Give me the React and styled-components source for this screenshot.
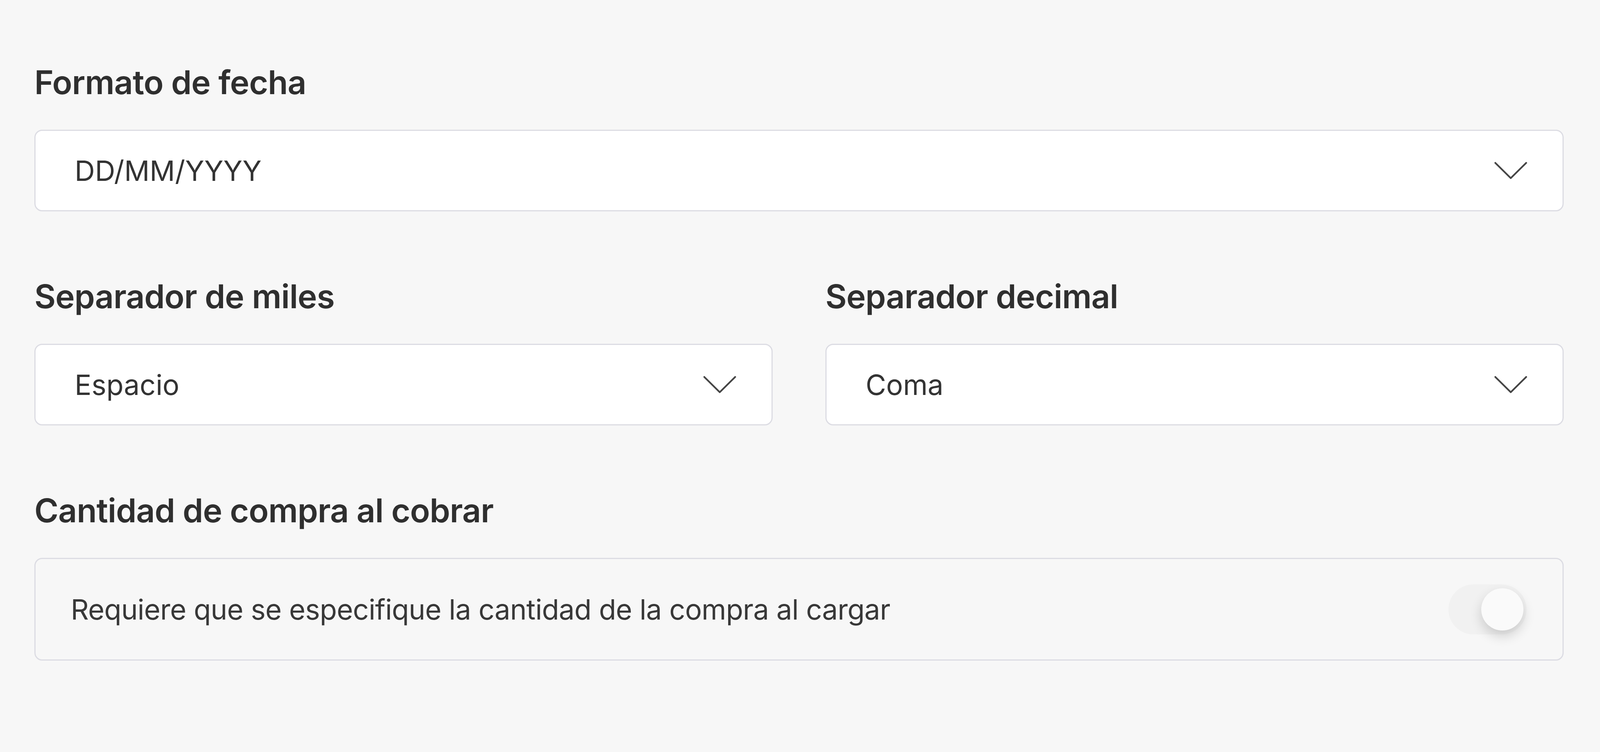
import React, { useState } from "react";
import styled, { createGlobalStyle } from "styled-components";

const GlobalStyle = createGlobalStyle`
  html, body {
    margin: 0;
    padding: 0;
    background: #f7f7f7;
  }
  body {
    font-family: Inter, "Noto Sans", sans-serif;
    color: #333333;
  }
`;

const Chevron = () => (
  <svg width="85" height="46" viewBox="0 0 85 46" fill="none">
    <polyline
      points="3,3 42.5,42 82,3"
      stroke="#454545"
      strokeWidth="4.5"
      strokeLinecap="round"
      strokeLinejoin="round"
    />
  </svg>
);

const Select = ({ value }) => (
  <SelectBox>
    <span>{value}</span>
    <Chevron />
  </SelectBox>
);

const Toggle = ({ on, onClick }) => (
  <Track onClick={onClick} $on={on}>
    <Knob $on={on} />
  </Track>
);

const App = () => {
  const [required, setRequired] = useState(true);

  return (
    <>
      <GlobalStyle />
      <Page>
        <Field>
          <Label>Formato de fecha</Label>
          <Select value="DD/MM/YYYY" />
        </Field>

        <Row>
          <Field>
            <Label>Separador de miles</Label>
            <Select value="Espacio" />
          </Field>
          <Field>
            <Label>Separador decimal</Label>
            <Select value="Coma" />
          </Field>
        </Row>

        <Field>
          <Label>Cantidad de compra al cobrar</Label>
          <SwitchBox>
            <span>Requiere que se especifique la cantidad de la compra al cargar</span>
            <Toggle on={required} onClick={() => setRequired(!required)} />
          </SwitchBox>
        </Field>
      </Page>
    </>
  );
};

const Page = styled.div`
  box-sizing: border-box;
  min-height: 1925px;
  padding: 160px 93px 0 88px;
  display: flex;
  flex-direction: column;
  gap: 167px;
`;

const Row = styled.div`
  display: grid;
  grid-template-columns: 1fr 1fr;
  gap: 135px;
`;

const Field = styled.div`
  display: flex;
  flex-direction: column;
  gap: 71px;
`;

const Label = styled.h2`
  margin: 0;
  font-size: 84px;
  line-height: 101px;
  font-weight: 600;
  color: #2f2f2f;
  letter-spacing: -0.01em;
`;

const SelectBox = styled.div`
  box-sizing: border-box;
  height: 209px;
  display: flex;
  align-items: center;
  justify-content: space-between;
  padding: 0 90px 0 100px;
  background: #ffffff;
  border: 3px solid #dcdce3;
  border-radius: 20px;
  font-size: 72px;
  font-weight: 400;
  color: #333333;
  cursor: pointer;
`;

const SwitchBox = styled.div`
  box-sizing: border-box;
  height: 263px;
  display: flex;
  align-items: center;
  justify-content: space-between;
  padding: 0 92px 0 90px;
  background: #f7f7f7;
  border: 3px solid #dcdce3;
  border-radius: 20px;
  font-size: 72px;
  letter-spacing: -0.01em;
  color: #383838;
`;

const Track = styled.div`
  position: relative;
  width: 200px;
  height: 128px;
  border-radius: 64px;
  background: ${(p) => (p.$on ? "#f1f1f1" : "#e4e4e4")};
  cursor: pointer;
`;

const Knob = styled.div`
  position: absolute;
  top: 10px;
  left: ${(p) => (p.$on ? "84px" : "8px")};
  width: 108px;
  height: 108px;
  border-radius: 50%;
  background: #fafafa;
  box-shadow: 0 14px 30px rgba(0, 0, 0, 0.16);
`;

export default App;
